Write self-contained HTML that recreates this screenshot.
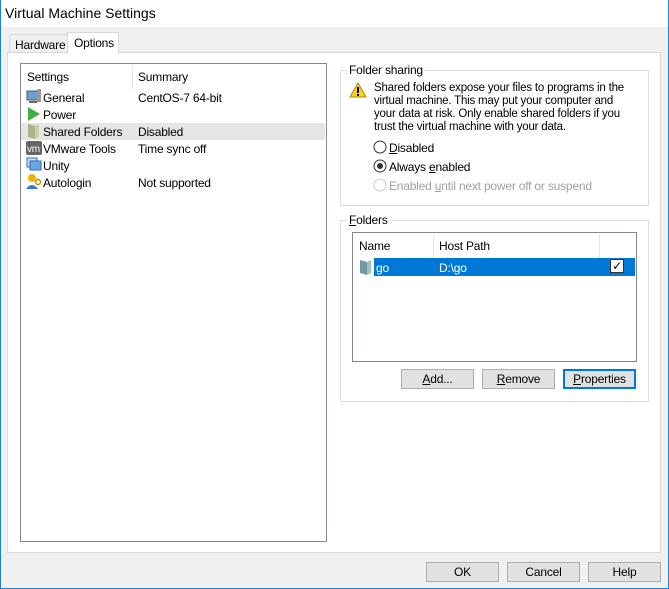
<!DOCTYPE html>
<html><head><style>
*{margin:0;padding:0;box-sizing:border-box}
body{width:669px;height:589px;background:#f0f0f0;font-family:"Liberation Sans",sans-serif;font-size:12px;letter-spacing:-0.2px;color:#000;position:relative;overflow:hidden}
.a{position:absolute}
.win{left:0;top:0;width:669px;height:589px;border:1px solid #1883d7;border-top:none}
.title{left:1px;top:0;width:667px;height:27px;background:#fff;font-size:14px;padding:5px 0 0 4px;letter-spacing:0}
.btn{position:absolute;height:20px;background:#e1e1e1;border:1px solid #adadad;text-align:center;line-height:18px}
.grp{position:absolute;border:1px solid #dcdcdc}
.lg{position:absolute;background:#fff;padding:0 2px;top:-8px;left:6px}
u{text-decoration:underline}
</style></head><body>
<div class="a win"></div>
<div class="a title">Virtual Machine Settings</div>
<div class="a" style="left:9px;top:34px;width:59px;height:19px;border:1px solid #d9d9d9;border-bottom:none;background:#f0f0f0;padding:3px 0 0 5px">Hardware</div>
<div class="a" style="left:7px;top:52px;width:654px;height:501px;background:#fff;border:1px solid #d9d9d9"></div>
<div class="a" style="left:67px;top:32px;width:52px;height:22px;border:1px solid #d9d9d9;border-bottom:none;background:#fff;padding:3px 0 0 6px">Options</div>

<div class="a" style="left:20px;top:63px;width:307px;height:479px;border:1px solid #828790;background:#fff"></div>
<div class="a" style="left:132px;top:65px;width:1px;height:24px;background:#e5e5e5"></div>
<div class="a" style="left:27px;top:70px">Settings</div>
<div class="a" style="left:138px;top:70px">Summary</div>
<div class="a" style="left:21px;top:123px;width:304px;height:17px;background:#e5e5e5"></div>
<svg class="a" style="left:26px;top:89px" width="16" height="100">
<rect x="1" y="2" width="12" height="9" fill="#6a9fd0" stroke="#555"/><rect x="11" y="0" width="4" height="13" fill="#999"/><rect x="3" y="12" width="8" height="2" fill="#666"/>
<path d="M2 18 L14 25 L2 32Z" fill="#3cb043"/>
<path d="M2 35 L9 37 L9 50 L2 48Z" fill="#a8b48a"/><path d="M9 37 L13 35 L13 48 L9 50Z" fill="#c8d0a8"/>
<rect x="0" y="52" width="16" height="14" rx="2" fill="#666"/><text x="1" y="63" font-size="10" fill="#fff" font-family="Liberation Sans">vm</text>
<rect x="1" y="69" width="10" height="9" fill="#cde" stroke="#2a6fc0"/><rect x="4" y="72" width="11" height="9" fill="#6aa7e0" stroke="#2a6fc0"/>
<circle cx="6" cy="89" r="4" fill="#f0b400"/><path d="M0 100 Q6 92 12 100Z" fill="#3a78c8"/><circle cx="12" cy="93" r="2.5" fill="none" stroke="#c89000" stroke-width="1.5"/>
</svg>
<div class="a" style="left:43px;top:90px;line-height:17px">General<br>Power<br>Shared Folders<br>VMware Tools<br>Unity<br>Autologin</div>
<div class="a" style="left:138px;top:90px;line-height:17px">CentOS-7 64-bit<br>&nbsp;<br>Disabled<br>Time sync off<br>&nbsp;<br>Not supported</div>

<div class="grp" style="left:340px;top:70px;width:309px;height:136px"><div class="lg">Folder sharing</div></div>
<svg class="a" style="left:349px;top:82px" width="18" height="16"><path d="M9 1 L17 15 L1 15Z" fill="#f7d51e" stroke="#b08800"/><rect x="8" y="5" width="2" height="6" fill="#000"/><rect x="8" y="12" width="2" height="2" fill="#000"/></svg>
<div class="a" style="left:374px;top:82px;line-height:13px;width:270px;font-size:11.5px">Shared folders expose your files to programs in the<br>virtual machine. This may put your computer and<br>your data at risk. Only enable shared folders if you<br>trust the virtual machine with your data.</div>
<svg class="a" style="left:373px;top:140px" width="14" height="54"><circle cx="7" cy="7" r="6" fill="#fff" stroke="#333"/><circle cx="7" cy="26" r="6" fill="#fff" stroke="#333"/><circle cx="7" cy="26" r="3" fill="#333"/><circle cx="7" cy="45" r="6" fill="#fff" stroke="#ccc"/></svg>
<div class="a" style="left:389px;top:141px"><u>D</u>isabled</div>
<div class="a" style="left:389px;top:160px">Always <u>e</u>nabled</div>
<div class="a" style="left:389px;top:179px;color:#a0a0a0">Enabled <u>u</u>ntil next power off or suspend</div>

<div class="grp" style="left:340px;top:220px;width:309px;height:182px"><div class="lg"><u>F</u>olders</div></div>
<div class="a" style="left:352px;top:232px;width:285px;height:130px;border:1px solid #828790;background:#fff"></div>
<div class="a" style="left:433px;top:234px;width:1px;height:24px;background:#e5e5e5"></div>
<div class="a" style="left:599px;top:234px;width:1px;height:24px;background:#e5e5e5"></div>
<div class="a" style="left:359px;top:239px">Name</div>
<div class="a" style="left:439px;top:239px">Host Path</div>
<div class="a" style="left:374px;top:258px;width:261px;height:18px;background:#0078d7"></div>
<svg class="a" style="left:359px;top:258px" width="14" height="18"><path d="M1 2 L8 4 L8 17 L1 15Z" fill="#6f9aa0"/><path d="M8 4 L12 2 L12 15 L8 17Z" fill="#9cc0c4"/></svg>
<div class="a" style="left:376px;top:261px;color:#fff">go</div>
<div class="a" style="left:439px;top:261px;color:#fff">D:\go</div>
<div class="a" style="left:610px;top:259px;width:14px;height:14px;background:#fff;border:1px solid #333;font-size:12px;line-height:12px;text-align:center">✓</div>
<div class="btn" style="left:401px;top:369px;width:73px"><u>A</u>dd...</div>
<div class="btn" style="left:482px;top:369px;width:73px"><u>R</u>emove</div>
<div class="btn" style="left:563px;top:369px;width:73px;border:2px solid #0078d7;line-height:16px"><u>P</u>roperties</div>

<div class="btn" style="left:426px;top:562px;width:73px">OK</div>
<div class="btn" style="left:507px;top:562px;width:73px">Cancel</div>
<div class="btn" style="left:588px;top:562px;width:73px">Help</div>
</body></html>
